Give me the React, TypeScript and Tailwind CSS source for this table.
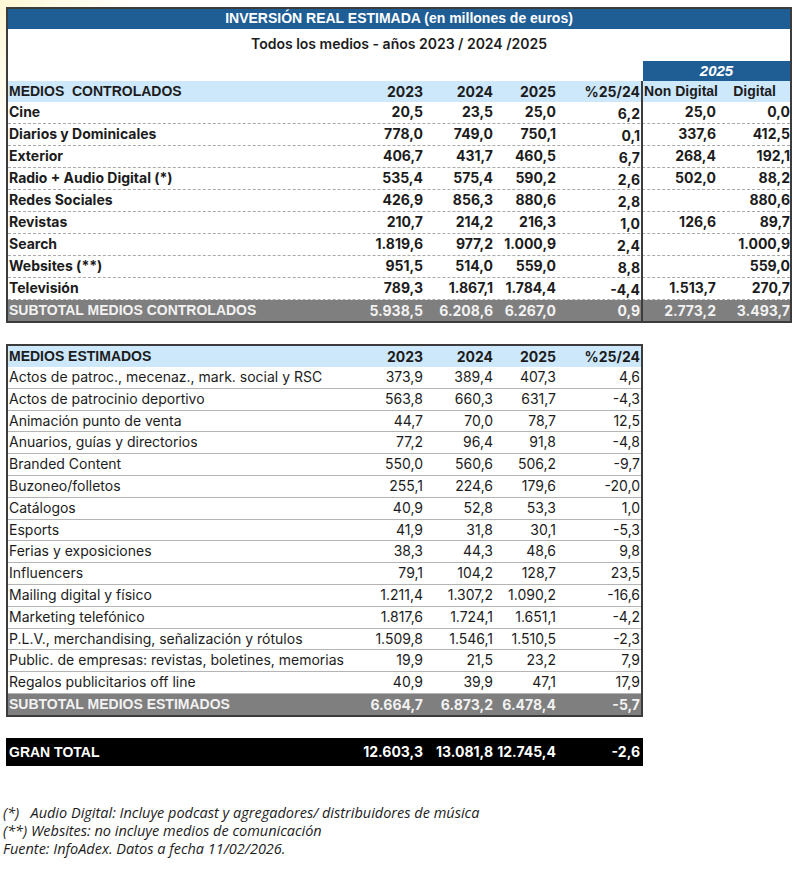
import React from "react";

type Row = string[];

const CONTROLADOS: Row[] = [
  ["Cine", "20,5", "23,5", "25,0", "6,2", "25,0", "0,0"],
  ["Diarios y Dominicales", "778,0", "749,0", "750,1", "0,1", "337,6", "412,5"],
  ["Exterior", "406,7", "431,7", "460,5", "6,7", "268,4", "192,1"],
  ["Radio + Audio Digital (*)", "535,4", "575,4", "590,2", "2,6", "502,0", "88,2"],
  ["Redes Sociales", "426,9", "856,3", "880,6", "2,8", "", "880,6"],
  ["Revistas", "210,7", "214,2", "216,3", "1,0", "126,6", "89,7"],
  ["Search", "1.819,6", "977,2", "1.000,9", "2,4", "", "1.000,9"],
  ["Websites (**)", "951,5", "514,0", "559,0", "8,8", "", "559,0"],
  ["Televisión", "789,3", "1.867,1", "1.784,4", "-4,4", "1.513,7", "270,7"],
];

const ESTIMADOS: Row[] = [
  ["Actos de patroc., mecenaz., mark. social y RSC", "373,9", "389,4", "407,3", "4,6"],
  ["Actos de patrocinio deportivo", "563,8", "660,3", "631,7", "-4,3"],
  ["Animación punto de venta", "44,7", "70,0", "78,7", "12,5"],
  ["Anuarios, guías y directorios", "77,2", "96,4", "91,8", "-4,8"],
  ["Branded Content", "550,0", "560,6", "506,2", "-9,7"],
  ["Buzoneo/folletos", "255,1", "224,6", "179,6", "-20,0"],
  ["Catálogos", "40,9", "52,8", "53,3", "1,0"],
  ["Esports", "41,9", "31,8", "30,1", "-5,3"],
  ["Ferias y exposiciones", "38,3", "44,3", "48,6", "9,8"],
  ["Influencers", "79,1", "104,2", "128,7", "23,5"],
  ["Mailing digital y físico", "1.211,4", "1.307,2", "1.090,2", "-16,6"],
  ["Marketing telefónico", "1.817,6", "1.724,1", "1.651,1", "-4,2"],
  ["P.L.V., merchandising, señalización y rótulos", "1.509,8", "1.546,1", "1.510,5", "-2,3"],
  ["Public. de empresas: revistas, boletines, memorias", "19,9", "21,5", "23,2", "7,9"],
  ["Regalos publicitarios off line", "40,9", "39,9", "47,1", "17,9"],
];

const GRID1 = "grid grid-cols-[352px_65px_70px_63px_85px_75px_1fr]";
const GRID2 = "grid grid-cols-[352px_65px_70px_63px_1fr]";
const ARIAL = "font-['Liberation_Sans',Arial,sans-serif]";
const INTER = "font-['Inter','Liberation_Sans',sans-serif]";

export default function App() {
  return (
    <div className="w-[797px] h-[869px] bg-[radial-gradient(circle_at_0_0,#fdf7d4,#ffffff_140px)] text-[#1c1c1c] pt-[7px]">
      {/* Medios controlados */}
      <div className="ml-[6px] w-[786px] border-2 border-[#3c3c3c] bg-white">
        <div className={`h-[20px] bg-[#1f5e95] text-white text-center text-[14px] font-bold leading-[19px] ${ARIAL}`}>
          INVERSIÓN REAL ESTIMADA (en millones de euros)
        </div>
        <div className={`h-[32px] pt-[4px] text-center text-[14px] font-semibold ${INTER}`}>
          Todos los medios - años 2023 / 2024 /2025
        </div>
        <div className={`${GRID1} h-[20px]`}>
          <div className="col-start-6 col-span-2 bg-[#1f5e95] text-white text-center italic font-bold text-[15px] leading-[20px] font-['Liberation_Sans',sans-serif]">
            2025
          </div>
        </div>
        <div className={`${GRID1} h-[21px] bg-[#cde8fb] text-[14px] font-bold leading-[21px] ${ARIAL}`}>
          <div className="pl-[1px]">MEDIOS&nbsp;&nbsp;CONTROLADOS</div>
          <div className={`text-right pr-[2px] ${INTER}`}>2023</div>
          <div className={`text-right pr-[2px] ${INTER}`}>2024</div>
          <div className={`text-right pr-[2px] ${INTER}`}>2025</div>
          <div className={`text-right pr-[1px] border-r-2 border-[#3c3c3c] ${INTER}`}>%25/24</div>
          <div className="text-right pr-0 whitespace-nowrap">Non Digital</div>
          <div className="text-right pr-[14px]">Digital</div>
        </div>
        {CONTROLADOS.map((r) => (
          <div
            key={r[0]}
            className={`${GRID1} h-[22px] border-b border-dashed border-[#a9a9a9] text-[14px] font-bold leading-[20px] ${INTER}`}
          >
            <div className="pl-[1px]">{r[0]}</div>
            <div className="text-right pr-[2px]">{r[1]}</div>
            <div className="text-right pr-[2px]">{r[2]}</div>
            <div className="text-right pr-[2px]">{r[3]}</div>
            <div className="text-right pr-[1px] pt-[2px] border-r-2 border-[#3c3c3c]">{r[4]}</div>
            <div className="text-right pr-[2px]">{r[5]}</div>
            <div className="text-right">{r[6]}</div>
          </div>
        ))}
        <div className={`${GRID1} h-[21px] bg-[#7f7f7f] text-[#f2f2f2] text-[14px] font-bold leading-[21px] ${INTER}`}>
          <div className={`pl-[1px] ${ARIAL}`}>SUBTOTAL MEDIOS CONTROLADOS</div>
          <div className="text-right pr-[2px]">5.938,5</div>
          <div className="text-right pr-[2px]">6.208,6</div>
          <div className="text-right pr-[2px]">6.267,0</div>
          <div className="text-right pr-[1px] border-r-2 border-[#3c3c3c]">0,9</div>
          <div className="text-right pr-[2px]">2.773,2</div>
          <div className="text-right">3.493,7</div>
        </div>
      </div>

      {/* Medios estimados */}
      <div className="mt-[21px] ml-[6px] w-[637px] border-2 border-[#3c3c3c] bg-white">
        <div className={`${GRID2} h-[21px] bg-[#cde8fb] text-[14px] font-bold leading-[21px] ${INTER}`}>
          <div className={`pl-[1px] ${ARIAL}`}>MEDIOS ESTIMADOS</div>
          <div className="text-right pr-[2px]">2023</div>
          <div className="text-right pr-[2px]">2024</div>
          <div className="text-right pr-[2px]">2025</div>
          <div className="text-right pr-[1px]">%25/24</div>
        </div>
        {ESTIMADOS.map((r) => (
          <div
            key={r[0]}
            className={`${GRID2} h-[21.8px] border-b-[1.5px] border-[#b4b4b4] text-[14px] leading-[20px] ${INTER}`}
          >
            <div className="pl-[1px] whitespace-nowrap">{r[0]}</div>
            <div className="text-right pr-[2px]">{r[1]}</div>
            <div className="text-right pr-[2px]">{r[2]}</div>
            <div className="text-right pr-[2px]">{r[3]}</div>
            <div className="text-right pr-[1px]">{r[4]}</div>
          </div>
        ))}
        <div className={`${GRID2} h-[21px] bg-[#7f7f7f] text-[#f2f2f2] text-[14px] font-bold leading-[21px] ${INTER}`}>
          <div className={`pl-[1px] ${ARIAL}`}>SUBTOTAL MEDIOS ESTIMADOS</div>
          <div className="text-right pr-[2px]">6.664,7</div>
          <div className="text-right pr-[2px]">6.873,2</div>
          <div className="text-right pr-[2px]">6.478,4</div>
          <div className="text-right pr-[1px]">-5,7</div>
        </div>
      </div>

      {/* Gran total */}
      <div className={`mt-[21px] ml-[6px] w-[637px] h-[28px] bg-black text-white px-[2px] ${GRID2} text-[14px] font-bold leading-[28px] ${INTER}`}>
        <div className={`pl-[1px] ${ARIAL}`}>GRAN TOTAL</div>
        <div className="text-right pr-[2px]">12.603,3</div>
        <div className="text-right pr-[2px]">13.081,8</div>
        <div className="text-right pr-[2px]">12.745,4</div>
        <div className="text-right pr-[1px]">-2,6</div>
      </div>

      {/* Notas */}
      <div className="mt-[38px] pl-[3px] text-[14.5px] leading-[18px] italic text-[#1c1c1c] font-['Open_Sans','Liberation_Sans',sans-serif]">
        <p>(*)&nbsp;&nbsp;&nbsp;Audio Digital: Incluye podcast y agregadores/ distribuidores de música</p>
        <p>(**) Websites: no incluye medios de comunicación</p>
        <p>Fuente: InfoAdex. Datos a fecha 11/02/2026.</p>
      </div>
    </div>
  );
}
